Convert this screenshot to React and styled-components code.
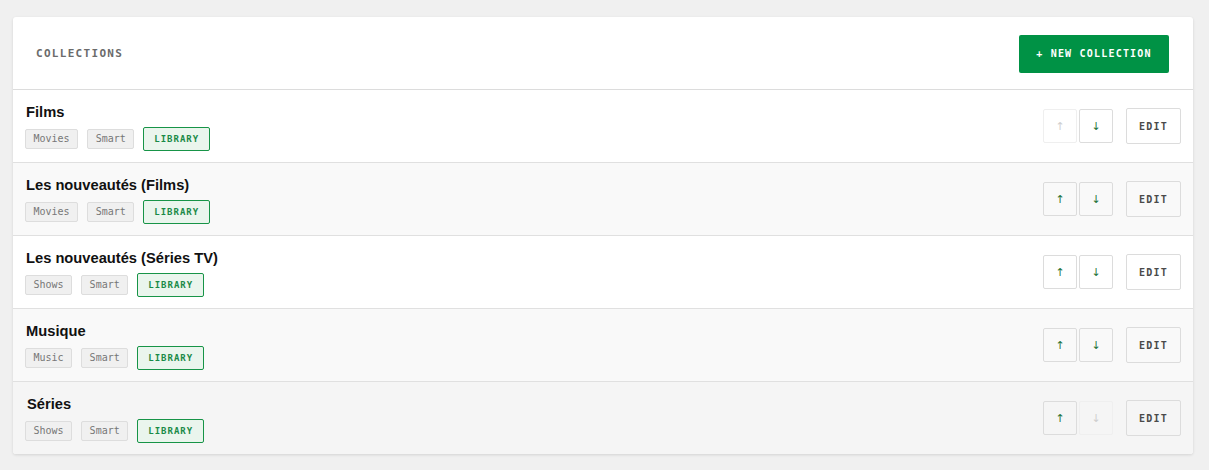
import React from "react";
import styled, { createGlobalStyle } from "styled-components";

const GlobalStyle = createGlobalStyle`
  body {
    margin: 0;
    background: #f0f0f0;
    font-family: "Liberation Sans", Arial, sans-serif;
  }
`;

const Page = styled.div`
  padding: 17px 16px 16px 13px;
`;

const Card = styled.section`
  background: #fff;
  border-radius: 3px;
  box-shadow: 0 1px 3px rgba(0, 0, 0, 0.12);
  overflow: hidden;
`;

const Header = styled.header`
  display: flex;
  align-items: center;
  justify-content: space-between;
  height: 72px;
  padding: 0 24px 0 23px;
  border-bottom: 1px solid #dcdcdc;
`;

const Heading = styled.h2`
  margin: 0;
  font-family: "DejaVu Sans Mono", monospace;
  font-size: 11px;
  font-weight: bold;
  letter-spacing: 1.3px;
  color: #6b6b6b;
`;

const NewButton = styled.button`
  height: 38px;
  width: 150px;
  margin-top: 1px;
  border: none;
  border-radius: 2px;
  background: #009245;
  color: #fff;
  font-family: "DejaVu Sans Mono", monospace;
  font-size: 10px;
  font-weight: bold;
  letter-spacing: 1.2px;
  cursor: pointer;
`;

const Row = styled.div`
  display: flex;
  align-items: center;
  justify-content: space-between;
  height: 72px;
  padding: 0 12px;
  background: ${(p) => p.$bg};
  border-top: ${(p) => (p.$first ? "none" : "1px solid #e0e0e0")};
`;

const Info = styled.div`
  display: flex;
  flex-direction: column;
  gap: 7px;
  padding-top: 2px;
`;

const Title = styled.div`
  font-size: 14.7px;
  font-weight: bold;
  line-height: 16px;
  color: #111;
  padding-left: ${(p) => (p.$shift ? "2px" : "1px")};
`;

const Tags = styled.div`
  display: flex;
  align-items: center;
  gap: 9px;
`;

const Tag = styled.span`
  font-family: "DejaVu Sans Mono", monospace;
  font-size: 10px;
  color: #777;
  background: #f0f0f0;
  border: 1px solid #ddd;
  border-radius: 2px;
  padding: 3px 7.5px;
  line-height: 12px;
`;

const LibTag = styled.span`
  font-family: "DejaVu Sans Mono", monospace;
  font-size: 9px;
  font-weight: bold;
  letter-spacing: 1px;
  color: #1a8a48;
  background: #eaf5ed;
  border: 1px solid #179447;
  border-radius: 2px;
  padding: 5px 10px;
  line-height: 12px;
`;

const Actions = styled.div`
  display: flex;
  align-items: center;
`;

const Arrow = styled.button`
  width: 34px;
  height: 34px;
  margin-left: 2px;
  border: 1px solid ${(p) => (p.disabled ? "#efefef" : "#dcdcdc")};
  border-radius: 2px;
  background: transparent;
  color: ${(p) => (p.disabled ? "#cfcfcf" : "#23743a")};
  font-family: "DejaVu Sans", sans-serif;
  font-size: 11px;
  padding: 0;
  display: flex;
  align-items: center;
  justify-content: center;
`;

const EditButton = styled.button`
  width: 55px;
  height: 36px;
  margin-left: 13px;
  border: 1px solid #dcdcdc;
  border-radius: 2px;
  background: transparent;
  color: #4a4a4a;
  font-family: "DejaVu Sans Mono", monospace;
  font-size: 10px;
  font-weight: bold;
  letter-spacing: 1.2px;
  padding: 0;
`;

const collections = [
  { name: "Films", type: "Movies", bg: "#fff", upOff: true },
  { name: "Les nouveautés (Films)", type: "Movies", bg: "#f9f9f9" },
  { name: "Les nouveautés (Séries TV)", type: "Shows", bg: "#fff" },
  { name: "Musique", type: "Music", bg: "#f9f9f9" },
  { name: "Séries", type: "Shows", bg: "#f5f5f5", downOff: true, shift: true },
];

export default function App() {
  return (
    <>
      <GlobalStyle />
      <Page>
        <Card>
          <Header>
            <Heading>COLLECTIONS</Heading>
            <NewButton>+ NEW COLLECTION</NewButton>
          </Header>
          {collections.map((c, i) => (
            <Row key={c.name} $bg={c.bg} $first={i === 0}>
              <Info>
                <Title $shift={c.shift}>{c.name}</Title>
                <Tags>
                  <Tag>{c.type}</Tag>
                  <Tag>Smart</Tag>
                  <LibTag>LIBRARY</LibTag>
                </Tags>
              </Info>
              <Actions>
                <Arrow disabled={c.upOff}>↑</Arrow>
                <Arrow disabled={c.downOff}>↓</Arrow>
                <EditButton>EDIT</EditButton>
              </Actions>
            </Row>
          ))}
        </Card>
      </Page>
    </>
  );
}
